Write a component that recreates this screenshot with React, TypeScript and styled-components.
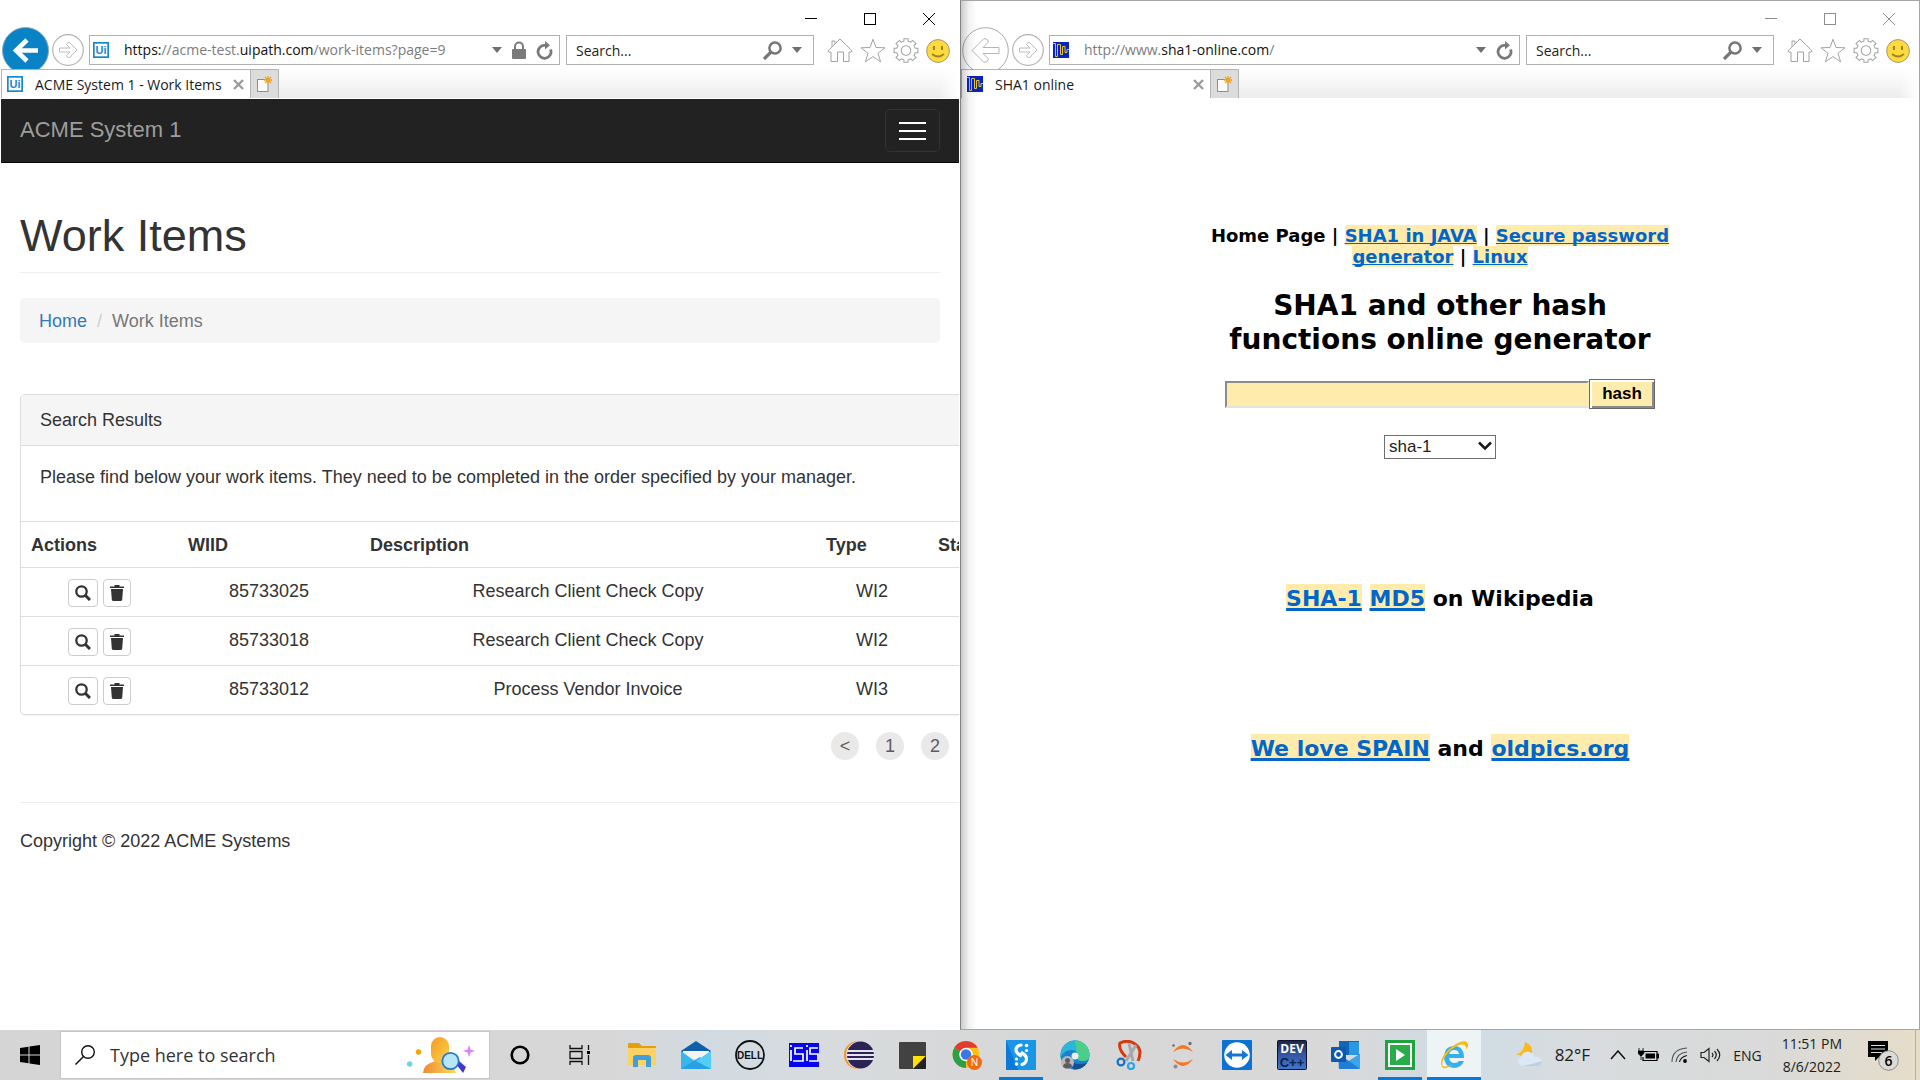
import React from "react";
import styled, { createGlobalStyle, css } from "styled-components";

const UI_FONT = '"Open Sans", "Noto Sans", sans-serif';
const PAGE_FONT = '"Liberation Sans", Arial, sans-serif';
const WIDE_FONT = '"DejaVu Sans", Verdana, sans-serif';

const GlobalStyle = createGlobalStyle`
  *, *::before, *::after { box-sizing: border-box; }
  body { margin: 0; background: #fff; }
  button, input, select { margin: 0; font: inherit; color: inherit; }
  svg { display: block; flex: none; }
`;

/* ---------- desktop and windows ---------- */

const Desktop = styled.div`
  display: flex;
  flex-direction: column;
  height: 100vh;
  font-family: ${UI_FONT};
`;

const Windows = styled.div`
  display: grid;
  grid-template-columns: 1fr 1fr;
  flex: 1;
  min-height: 0;
`;

const WindowFrame = styled.section<{ $back?: boolean }>`
  position: relative;
  display: flex;
  flex-direction: column;
  min-width: 0;
  overflow: hidden;
  background: #fff;
  border: 1px solid #fff;
  ${(p) =>
    p.$back &&
    css`
      border-color: #a5a5a5;
      border-left-color: #828282;
      &::after {
        content: "";
        position: absolute;
        inset: 0 auto 0 0;
        width: 16px;
        pointer-events: none;
        background: linear-gradient(90deg, rgba(0, 0, 0, 0.2), rgba(0, 0, 0, 0.05) 50%, transparent);
      }
    `}
`;

const TitleBar = styled.div<{ $dim?: boolean }>`
  display: flex;
  justify-content: flex-end;
  height: 26px;
  padding: 6px 1px 0 0;
  color: ${(p) => (p.$dim ? "#8c8c8c" : "#000")};
`;

const TitleButton = styled.button`
  display: flex;
  justify-content: center;
  align-items: center;
  width: 59px;
  height: 24px;
  padding: 0;
  background: none;
  border: 0;
`;

const NavRow = styled.div`
  display: flex;
  align-items: flex-start;
  height: 42px;
  padding: 0 9px 0 1px;
  overflow: hidden;
`;

const NavButton = styled.button`
  flex: none;
  padding: 0;
  background: none;
  border: 0;
`;

const ForwardButton = styled(NavButton)`
  margin: 7px 5px 0 3px;
`;

const Field = styled.div`
  display: flex;
  align-items: center;
  height: 30px;
  margin-top: 8px;
  border: 1px solid #b1b1b1;
  background: #fff;
  font-size: 14px;
  color: #111;
`;

const AddressField = styled(Field)`
  flex: 1;
  min-width: 0;
  padding: 0 6px 0 3px;
`;

const Address = styled.div`
  flex: 1;
  min-width: 0;
  padding-left: 15px;
  line-height: 28px;
  white-space: nowrap;
  color: #7c7c7c;
  b {
    font-weight: 400;
    color: #111;
  }
`;

const FieldIcons = styled.div`
  display: flex;
  align-items: center;
  gap: 10px;
`;

const SearchField = styled(Field)`
  width: 248px;
  margin-left: 6px;
  padding: 0 11px 0 9px;
  input {
    flex: 1;
    min-width: 0;
    padding: 0;
    border: 0;
    outline: 0;
    background: none;
    &::placeholder {
      color: #222;
      opacity: 1;
    }
  }
`;

const ToolIcons = styled.div`
  display: flex;
  gap: 7px;
  margin: 11px 0 0 13px;
`;

const TabStrip = styled.div`
  display: flex;
  height: 29px;
  background:
    linear-gradient(90deg, transparent calc(100% - 20px), #fff),
    linear-gradient(#fdfdfd 10%, #ececec);
`;

const Tab = styled.div`
  display: flex;
  align-items: center;
  width: 250px;
  padding: 0 6px 0 5px;
  border: 1px solid #b4b4b4;
  border-bottom: 0;
  background: #fff;
  font-size: 14px;
  color: #1a1a1a;
  white-space: nowrap;
`;

const TabTitle = styled.span`
  flex: 1;
  min-width: 0;
  padding-left: 12px;
`;

const NewTab = styled.button`
  display: flex;
  align-items: center;
  justify-content: center;
  width: 28px;
  padding: 0;
  border: 1px solid #b4b4b4;
  border-width: 1px 1px 0 0;
  background: #dcdcdc;
`;

/* ---------- drawings in the window frame ---------- */

const UiLogo = () => (
  <svg width="16" height="16" viewBox="0 0 16 16">
    <rect width="16" height="16" fill="#1489d0" />
    <rect x="1.7" y="1.7" width="12.6" height="12.6" fill="#fff" />
    <text x="2.6" y="12" fontFamily="Liberation Sans" fontWeight="700" fontSize="11" fill="#1489d0">Ui</text>
  </svg>
);

const ShaLogo = () => (
  <svg width="16" height="16" viewBox="0 0 16 16">
    <rect width="16" height="16" fill="#0723c6" />
    <path d="M0 1.500h2.500v13h2v-12h3v10h2v-8h2.500v6h2v-3h2" fill="none" stroke="#e5c53a" strokeWidth="1" />
  </svg>
);

const BackIcon = ({ active }: { active?: boolean }) =>
  active ? (
    <svg width="47" height="47" viewBox="0 0 47 47">
      <circle cx="23.5" cy="23.5" r="23" fill="#0a83c6" stroke="#8aa5b3" />
      <path d="M25 13 14 23.500 25 34M14 23.500h22" fill="none" stroke="#fff" strokeWidth="4.6" />
    </svg>
  ) : (
    <svg width="47" height="47" viewBox="0 0 47 47">
      <circle cx="23.5" cy="23.5" r="22.8" fill="none" stroke="#ababab" />
      <path d="M10 23.500 22 11.500q4 0 4.500 3.500l-5.500 5.500h16v6h-16l5.500 5.500q-.5 3.500-4.500 3.500z" fill="#fff" stroke="#b5b5b5" />
    </svg>
  );

const ForwardIcon = () => (
  <svg width="32" height="32" viewBox="0 0 32 32">
    <circle cx="16" cy="16" r="15.3" fill="#fff" stroke="#b4b4b4" strokeWidth="1.2" />
    <path d="M25 16 17.500 8.300q-2.500 0-3 2.200l3.500 3.500H7.500v4H18l-3.500 3.500q.5 2.200 3 2.200z" fill="none" stroke="#bbb" />
  </svg>
);

const CaretIcon = () => (
  <svg width="10" height="6" viewBox="0 0 10 6"><path d="M0 0h10L5 6z" fill="#707070" /></svg>
);

const LockIcon = () => (
  <svg width="14" height="18" viewBox="0 0 14 18">
    <path d="M3 9V5.500a4 4 0 0 1 8 0V9" fill="none" stroke="#7a7a7a" strokeWidth="2" />
    <rect y="8" width="14" height="10" rx="1" fill="#7a7a7a" />
  </svg>
);

const RefreshIcon = () => (
  <svg width="17" height="19" viewBox="0 0 17 19">
    <path d="M14.600 8.500A6.500 6.500 0 1 1 9 4.300" fill="none" stroke="#7a7a7a" strokeWidth="2.8" />
    <path d="M9 0l5 4.300-5 4.200z" fill="#7a7a7a" />
  </svg>
);

const MagnifierIcon = () => (
  <svg width="19" height="19" viewBox="0 0 19 19">
    <circle cx="12" cy="7" r="5.6" fill="none" stroke="#757575" strokeWidth="2.5" />
    <path d="M8 11 1 18" stroke="#757575" strokeWidth="3.2" />
  </svg>
);

const HomeIcon = () => (
  <svg width="26" height="25" viewBox="0 0 26 25">
    <path d="M.8 13 13 1l12.200 12-1 1H22v9.500h-5.500V14h-6v9.500H4V14H1.800zM5 8.500V3h3v2.500" fill="#fff" stroke="#a2a2a2" />
  </svg>
);

const StarIcon = () => (
  <svg width="26" height="25" viewBox="0 0 26 25">
    <path d="m13 1.200 3 8.300 9 .3-7 5.500 2.600 8.500L13 18.600l-7.600 5.200L8 15.300 1 9.800l9-.3z" fill="#fff" stroke="#a2a2a2" />
  </svg>
);

const GearIcon = () => (
  <svg width="26" height="25" viewBox="0 0 24 24">
    <path
      d="M10 3V.7h4V3l2.600 1 1.700-1.700 3.300 3-1.900 2 1.200 2.600h2.500v4.200h-2.500l-1.200 2.600 1.900 2-3.300 3-1.700-1.700-2.600 1v2.300h-4V21l-2.600-1-1.700 1.700-3.300-3 1.900-2-1.200-2.600H.6V9.900h2.500l1.200-2.600-1.900-2 3.300-3L7.400 4z"
      fill="#fff"
      stroke="#a2a2a2"
    />
    <circle cx="12" cy="12" r="4.6" fill="none" stroke="#a2a2a2" />
  </svg>
);

const SmileIcon = () => (
  <svg width="24" height="24" viewBox="0 0 24 24">
    <circle cx="12" cy="12" r="11.4" fill="#ffd93e" stroke="#a39a70" />
    <rect x="7" y="7" width="2" height="4" fill="#9a8427" />
    <rect x="15" y="7" width="2" height="4" fill="#9a8427" />
    <path d="M6 15q6 5 12 0" fill="none" stroke="#9a8427" strokeWidth="1.8" />
  </svg>
);

const CloseTabIcon = () => (
  <svg width="11" height="11" viewBox="0 0 11 11"><path d="m1 1 9 9M10 1l-9 9" stroke="#9a9a9a" strokeWidth="2.3" /></svg>
);

const NewTabIcon = () => (
  <svg width="15" height="16" viewBox="0 0 15 16">
    <rect x=".5" y="3.5" width="10.5" height="12" fill="#fafafa" stroke="#8d8d8d" />
    <path d="M11 0v8M7 4h8M8 1l6 6M14 1 8 7" stroke="#f0a51e" strokeWidth="1.3" />
  </svg>
);

type FrameProps = {
  back?: boolean;
  logo: React.ReactNode;
  address: React.ReactNode;
  title: string;
  secure?: boolean;
  children: React.ReactNode;
};

const BrowserWindow = ({ back, logo, address, title, secure, children }: FrameProps) => (
  <WindowFrame $back={back} aria-label={title}>
    <TitleBar $dim={back}>
      <TitleButton aria-label="Minimize">
        <svg width="12" height="12" viewBox="0 0 12 12"><path d="M0 5.500h12" stroke="currentColor" /></svg>
      </TitleButton>
      <TitleButton aria-label="Maximize">
        <svg width="12" height="12" viewBox="0 0 12 12"><rect x=".5" y=".5" width="11" height="11" fill="none" stroke="currentColor" /></svg>
      </TitleButton>
      <TitleButton aria-label="Close">
        <svg width="12" height="12" viewBox="0 0 12 12"><path d="m0 0 12 12M12 0 0 12" stroke="currentColor" /></svg>
      </TitleButton>
    </TitleBar>
    <NavRow>
      <NavButton aria-label="Back"><BackIcon active={!back} /></NavButton>
      <ForwardButton aria-label="Forward"><ForwardIcon /></ForwardButton>
      <AddressField>
        {logo}
        <Address role="textbox" aria-label="Address" tabIndex={0}>{address}</Address>
        <FieldIcons>
          <CaretIcon />
          {secure && <LockIcon />}
          <RefreshIcon />
        </FieldIcons>
      </AddressField>
      <SearchField>
        <input type="text" placeholder="Search..." aria-label="Search the web" />
        <FieldIcons><MagnifierIcon /><CaretIcon /></FieldIcons>
      </SearchField>
      <ToolIcons>
        <NavButton aria-label="Home page"><HomeIcon /></NavButton>
        <NavButton aria-label="Favorites"><StarIcon /></NavButton>
        <NavButton aria-label="Tools"><GearIcon /></NavButton>
        <NavButton aria-label="Send feedback"><SmileIcon /></NavButton>
      </ToolIcons>
    </NavRow>
    <TabStrip>
      <Tab>
        {logo}
        <TabTitle>{title}</TabTitle>
        <NavButton aria-label="Close tab"><CloseTabIcon /></NavButton>
      </Tab>
      <NewTab aria-label="New tab"><NewTabIcon /></NewTab>
    </TabStrip>
    {children}
  </WindowFrame>
);

/* ---------- ACME page ---------- */

const AcmePage = styled.div`
  flex: 1;
  min-height: 0;
  margin-top: 1px;
  overflow: hidden;
  font-family: ${PAGE_FONT};
  font-size: 18px;
  line-height: 25px;
  color: #333;
`;

const AcmeNav = styled.header`
  display: flex;
  align-items: flex-start;
  justify-content: space-between;
  height: 64px;
  padding: 10px 19px;
  background: #222;
  border-bottom: 1px solid #080808;
`;

const Brand = styled.a`
  font-size: 22px;
  line-height: 42px;
  color: #9d9d9d;
  text-decoration: none;
`;

const MenuButton = styled.button`
  display: flex;
  flex-direction: column;
  align-items: center;
  justify-content: center;
  gap: 6px;
  width: 55px;
  height: 43px;
  padding: 0;
  background: none;
  border: 1px solid #333;
  border-radius: 5px;
  span {
    width: 27px;
    height: 2px;
    background: #fff;
  }
`;

const AcmeBody = styled.main`
  padding: 48px 0 0 19px;
`;

const PageTitle = styled.h1`
  margin: 0 19px 25px 0;
  padding-bottom: 11px;
  border-bottom: 1px solid #eee;
  font-size: 45px;
  line-height: 50px;
  font-weight: 400;
`;

const Breadcrumb = styled.nav`
  display: flex;
  gap: 10px;
  margin: 0 19px 51px 0;
  padding: 11px 19px 9px;
  background: #f5f5f5;
  border-radius: 5px;
  color: #777;
  a {
    color: #337ab7;
    text-decoration: none;
  }
  i {
    font-style: normal;
    color: #ccc;
  }
`;

const Panel = styled.section`
  width: 1400px;
  border: 1px solid #ddd;
  border-radius: 5px;
  box-shadow: 0 1px 1px rgba(0, 0, 0, 0.05);
`;

const PanelHeading = styled.h2`
  margin: 0;
  padding: 13px 19px 12px;
  background: #f5f5f5;
  border-bottom: 1px solid #ddd;
  border-radius: 5px 5px 0 0;
  font-size: inherit;
  font-weight: 400;
`;

const PanelText = styled.p`
  margin: 0;
  padding: 19px 19px 31px;
`;

const ItemsTable = styled.table`
  width: 100%;
  table-layout: fixed;
  border-spacing: 0;
  th,
  td {
    padding: 11px 10px 9px;
    border-top: 1px solid #ddd;
    vertical-align: top;
    text-align: center;
  }
  th {
    text-align: left;
    font-weight: 700;
  }
  td {
    height: 49px;
  }
`;

const RowActions = styled.div`
  display: flex;
  justify-content: center;
  gap: 5px;
  height: 28px;
`;

const RowButton = styled.button<{ $wide?: boolean }>`
  display: flex;
  align-items: center;
  justify-content: center;
  width: ${(p) => (p.$wide ? 30 : 28)}px;
  padding: 0;
  background: #fff;
  border: 1px solid #ccc;
  border-radius: 4px;
`;

const Pager = styled.nav`
  display: flex;
  gap: 17px;
  padding: 17px 0 42px 811px;
`;

const PageButton = styled.button`
  width: 28px;
  height: 28px;
  padding: 0;
  border: 0;
  border-radius: 14px;
  background: #e9e9e9;
  color: #5c5c5c;
`;

const Footer = styled.footer`
  padding-top: 26px;
  border-top: 1px solid #eee;
`;

const WORK_ITEMS = [
  { id: "85733025", description: "Research Client Check Copy", type: "WI2" },
  { id: "85733018", description: "Research Client Check Copy", type: "WI2" },
  { id: "85733012", description: "Process Vendor Invoice", type: "WI3" },
];

const ViewIcon = () => (
  <svg width="16" height="16" viewBox="0 0 16 16">
    <circle cx="6.5" cy="6.5" r="5.2" fill="none" stroke="#333" strokeWidth="2.3" />
    <path d="m10.300 10.300 4.700 4.700" stroke="#333" strokeWidth="3" />
  </svg>
);

const TrashIcon = () => (
  <svg width="14" height="16" viewBox="0 0 14 16">
    <path d="M0 1.500h4.500V0h5v1.500H14V3H0z" fill="#333" />
    <path d="M1 4h12l-.8 10.500q-.2 1.500-1.700 1.500h-7q-1.500 0-1.700-1.500z" fill="#333" />
  </svg>
);

const WorkItemsPage = () => (
  <AcmePage>
    <AcmeNav>
      <Brand href="#">ACME System 1</Brand>
      <MenuButton aria-label="Toggle navigation"><span /><span /><span /></MenuButton>
    </AcmeNav>
    <AcmeBody>
      <PageTitle>Work Items</PageTitle>
      <Breadcrumb><a href="#">Home</a><i>/</i><span>Work Items</span></Breadcrumb>
      <Panel>
        <PanelHeading>Search Results</PanelHeading>
        <PanelText>Please find below your work items. They need to be completed in the order specified by your manager.</PanelText>
        <ItemsTable>
          <colgroup>
            <col width="157" /><col width="182" /><col width="456" /><col width="112" /><col />
          </colgroup>
          <thead>
            <tr><th>Actions</th><th>WIID</th><th>Description</th><th>Type</th><th>Status</th></tr>
          </thead>
          <tbody>
            {WORK_ITEMS.map((item) => (
              <tr key={item.id}>
                <td>
                  <RowActions>
                    <RowButton $wide aria-label="View"><ViewIcon /></RowButton>
                    <RowButton aria-label="Delete"><TrashIcon /></RowButton>
                  </RowActions>
                </td>
                <td>{item.id}</td>
                <td>{item.description}</td>
                <td>{item.type}</td>
                <td />
              </tr>
            ))}
          </tbody>
        </ItemsTable>
      </Panel>
      <Pager aria-label="Pages">
        <PageButton>&lt;</PageButton>
        <PageButton>1</PageButton>
        <PageButton>2</PageButton>
      </Pager>
      <Footer>Copyright © 2022 ACME Systems</Footer>
    </AcmeBody>
  </AcmePage>
);

/* ---------- SHA1 page ---------- */

const ShaPage = styled.main`
  display: flex;
  flex-direction: column;
  align-items: center;
  padding-top: 127px;
  font-family: ${WIDE_FONT};
  font-weight: 700;
  color: #000;
  text-align: center;
`;

const HashLink = styled.a<{ $thick?: boolean }>`
  padding-top: ${(p) => (p.$thick ? 2 : 0)}px;
  color: #06c;
  background: #ffecac;
  text-decoration: underline ${(p) => (p.$thick ? 3 : 1)}px;
  text-underline-offset: ${(p) => (p.$thick ? 2 : 1)}px;
  text-decoration-skip-ink: none;
`;

const ShaNav = styled.nav`
  max-width: 480px;
  font-size: 18px;
  line-height: 21px;
`;

const ShaTitle = styled.h1`
  max-width: 480px;
  margin: 22px 0 22px;
  font-size: 28px;
  line-height: 34px;
`;

const HashForm = styled.form`
  display: flex;
  flex-direction: column;
  align-items: center;
  gap: 26px;
  font-family: ${PAGE_FONT};
`;

const HashRow = styled.div`
  display: flex;
  align-items: center;
  input {
    width: 364px;
    height: 27px;
    border: 2px solid;
    border-color: #8c8c8c #ffecac #e3e3e3 #8c8c8c;
    border-radius: 0;
    background: #ffecac;
    outline: 0;
  }
  button {
    width: 66px;
    height: 30px;
    padding: 0;
    border: 1px solid #696969;
    border-radius: 0;
    background: #ffecac;
    box-shadow: inset 2px 2px #fff, inset -2px -2px #8a8a8a;
    font-size: 17px;
    font-weight: 700;
  }
`;

const SelectBox = styled.label`
  position: relative;
  display: block;
  select {
    appearance: none;
    display: block;
    width: 112px;
    height: 24px;
    padding: 0 24px 0 4px;
    border: 1px solid #6f6f6f;
    border-radius: 0;
    background: #fff;
    font-size: 17px;
    line-height: 22px;
    font-weight: 400;
    color: #222;
  }
  svg {
    position: absolute;
    top: 6px;
    right: 4px;
    pointer-events: none;
  }
`;

const LinkLine = styled.p<{ $first?: boolean }>`
  margin: ${(p) => (p.$first ? 126 : 123)}px 0 0;
  font-size: 22px;
  line-height: 27px;
`;

const HashPage = () => (
  <ShaPage>
    <ShaNav>
      Home Page | <HashLink href="#">SHA1 in JAVA</HashLink> | <HashLink href="#">Secure password generator</HashLink> |{" "}
      <HashLink href="#">Linux</HashLink>
    </ShaNav>
    <ShaTitle>SHA1 and other hash functions online generator</ShaTitle>
    <HashForm onSubmit={(e) => e.preventDefault()}>
      <HashRow>
        <input type="text" aria-label="Text to hash" />
        <button type="submit">hash</button>
      </HashRow>
      <SelectBox>
        <select aria-label="Hash function" defaultValue="sha-1">
          <option>sha-1</option>
        </select>
        <svg width="14" height="10" viewBox="0 0 14 10"><path d="m1 1.500 6 6 6-6" fill="none" stroke="#1a1a1a" strokeWidth="2.5" /></svg>
      </SelectBox>
    </HashForm>
    <LinkLine $first>
      <HashLink $thick href="#">SHA-1</HashLink> <HashLink $thick href="#">MD5</HashLink> on Wikipedia
    </LinkLine>
    <LinkLine>
      <HashLink $thick href="#">We love SPAIN</HashLink> and <HashLink $thick href="#">oldpics.org</HashLink>
    </LinkLine>
  </ShaPage>
);

/* ---------- taskbar ---------- */

const Taskbar = styled.footer`
  display: flex;
  align-items: stretch;
  flex: none;
  height: 50px;
  background: linear-gradient(90deg, #d5d5d5, #d7d7d7 32%, #d2dbe2 37%, #d8dbdd 44%, #d6d6d6 55%, #d9d9d9 70%, #cfdce6 76%, #d8dcde 82%, #d9dad9 92%, #e3dccd 98%, #e6dcc8);
  color: #1c1c1c;
`;

const SlotButton = styled.button`
  display: flex;
  align-items: center;
  justify-content: center;
  width: 60px;
  padding: 0;
  background: none;
  border: 0;
`;

const TaskSearch = styled.label`
  display: flex;
  align-items: center;
  width: 430px;
  margin: 1px 0;
  padding: 0 14px;
  background: #fff;
  border: 1px solid #c6c6c6;
  input {
    flex: 1;
    min-width: 0;
    padding: 0 0 0 14px;
    border: 0;
    outline: 0;
    background: none;
    font-size: 18px;
    &::placeholder {
      color: #333;
      opacity: 1;
    }
  }
`;

const Apps = styled.div`
  display: grid;
  grid-template-columns: repeat(16, 1fr);
  width: 866px;
  margin-left: 5px;
`;

const AppButton = styled.button<{ $running?: boolean; $active?: boolean }>`
  display: flex;
  align-items: center;
  justify-content: center;
  padding: 0;
  border: 0;
  background: ${(p) => (p.$active ? "#eef3f6" : "none")};
  box-shadow: ${(p) => (p.$running || p.$active ? "inset 0 -3px #0b78d4" : "none")};
  margin: 0 ${(p) => (p.$running ? 5 : 0)}px;
`;

const Tray = styled.div`
  display: flex;
  flex: 1;
  align-items: center;
  justify-content: flex-end;
  font-size: 14px;
  padding-right: 4px;
`;

const TrayButton = styled.button`
  display: flex;
  align-items: center;
  gap: 12px;
  padding: 0;
  border: 0;
  background: none;
  line-height: 22px;
`;

const Temperature = styled.span`
  font-size: 17px;
`;

const TrayIcons = styled.div`
  display: flex;
  align-items: center;
  gap: 12px;
  margin: 0 20px;
`;

const Clock = styled.time`
  display: block;
  line-height: 23px;
  text-align: center;
`;

const Notices = styled.button`
  margin: 0 16px 0 26px;
  padding: 0;
  border: 0;
  background: none;
`;

const ShowDesktop = styled.div`
  width: 1px;
  align-self: stretch;
  background: #b9b2a4;
`;

const Icon = ({ children, w = 30, h = 30 }: { children: React.ReactNode; w?: number; h?: number }) => (
  <svg width={w} height={h} viewBox={`0 0 ${w} ${h}`}>{children}</svg>
);

const PersonArt = () => (
  <Icon w={68} h={38}>
    <defs>
      <linearGradient id="person" x1="0" y1="0" x2="1" y2="1">
        <stop offset="0" stopColor="#f59a23" />
        <stop offset="1" stopColor="#fdd34c" />
      </linearGradient>
      <linearGradient id="personBase" x1="0" y1="0" x2="1" y2="0">
        <stop offset="0" stopColor="#ee8a35" />
        <stop offset="1" stopColor="#fcdc58" />
      </linearGradient>
    </defs>
    <path d="M16 37q1-9 10-11 5-2 7-4h10l6 15z" fill="url(#personBase)" />
    <rect x="24" y="1" width="18" height="26" rx="9" fill="url(#person)" />
    <path d="m49 28 3-3 7 6-3 6z" fill="#4338ca" />
    <circle cx="43.5" cy="25" r="8.2" fill="#b7e6f6" stroke="#2378cf" strokeWidth="1.8" />
    <circle cx="11.5" cy="16" r="2.7" fill="#f5a40a" />
    <circle cx="2.7" cy="28" r="2.7" fill="#6ad5e6" />
    <path d="m62 9 1.500 4.500L68 15l-4.500 1.500L62 21l-1.500-4.500L56 15l4.500-1.500z" fill="#dd82f5" />
  </Icon>
);

const FolderIcon = () => (
  <Icon w={28} h={24}>
    <path d="M0 1q0-1 1-1h10l3 3h13q1 0 1 1v18H0z" fill="#e0a010" />
    <path d="M0 5h28v16q0 1-1 1H1q-1 0-1-1z" fill="#fdd264" />
    <path d="M5 24V15q0-3 3-3h12q3 0 3 3v9h-5v-7h-8v7z" fill="#3f9fdd" />
  </Icon>
);

const MailIcon = () => (
  <Icon>
    <path d="M0 11 15 1l15 10v3H0z" fill="#0f5fa8" />
    <path d="M2 11h26v8H2z" fill="#f4f4f4" />
    <path d="M0 11l15 11 15-11v18H0z" fill="#38b6ec" />
    <path d="m0 29 19-12 11 12z" fill="#2aa0e4" />
    <path d="M15 21 30 29V11z" fill="#52cdf6" />
  </Icon>
);

const DellIcon = () => (
  <Icon>
    <circle cx="15" cy="15" r="14" fill="none" stroke="#111" strokeWidth="1.8" />
    <text x="15" y="18.5" textAnchor="middle" fontFamily="Liberation Sans" fontWeight="700" fontSize="10" fill="#111">DELL</text>
  </Icon>
);

const IsisIcon = () => (
  <Icon h={24}>
    <rect width="30" height="24" fill="#0505ee" />
    <g fill="none" stroke="#fff" strokeWidth="1.7">
      <path d="M2 2v2M2 7v11M14 5H6v6h8v7H4M18 2v2M18 7v11M29 5h-8v6h8v7h-9" />
    </g>
  </Icon>
);

const EclipseIcon = () => (
  <Icon>
    <circle cx="14" cy="15" r="14" fill="#f7941e" />
    <circle cx="16" cy="15" r="14" fill="#dcdcdc" />
    <circle cx="16.5" cy="15" r="13.5" fill="#2c2255" />
    <path d="M3 11h27M3 15h27M3 19h27" stroke="#e4e4f0" strokeWidth="1.8" />
  </Icon>
);

const StickyIcon = () => (
  <Icon w={27} h={27}>
    <path d="M1 0h25q1 0 1 1v25q0 1-1 1H1q-1 0-1-1V1q0-1 1-1z" fill="#424242" />
    <path d="M14 27V14h13z" fill="#fde100" />
    <path d="M14 27 27 14v12q0 1-1 1z" fill="#222" />
  </Icon>
);

const ChromeIcon = () => (
  <Icon>
    <circle cx="14" cy="14.5" r="13.5" fill="#fbc116" />
    <path d="M14 14.500 2.300 7.800A13.500 13.500 0 0 0 14 28z" fill="#2c9f47" />
    <path d="M2.300 7.800A13.500 13.500 0 0 1 25.700 7.800H14v7z" fill="#e33b2e" />
    <circle cx="14" cy="14.5" r="6.8" fill="#fff" />
    <circle cx="14" cy="14.5" r="5.2" fill="#3b78e7" />
    <circle cx="22.5" cy="22.5" r="7.5" fill="#f26b0f" />
    <text x="22.5" y="26" textAnchor="middle" fontFamily="Open Sans" fontSize="10" fill="#fff">N</text>
  </Icon>
);

const StudioIcon = () => (
  <Icon>
    <rect width="30" height="30" fill="#0b78da" />
    <path d="M0 0h30v30H12z" fill="#1a96e6" />
    <path d="M15 5q-5 1-5 5 0 3 4.500 5.500M16 13q4.500 2.500 4.500 6 0 4-4.500 5.500" fill="none" stroke="#fff" strokeWidth="3.2" strokeLinecap="round" />
    <circle cx="20.500" cy="5.500" r="1.800" fill="#fff" />
    <circle cx="20.5" cy="10.5" r="1.6" fill="#fff" />
    <circle cx="10.5" cy="24" r="1.8" fill="#fff" />
    <circle cx="10.500" cy="19" r="1.600" fill="#fff" />
  </Icon>
);

const EdgeIcon = () => (
  <Icon>
    <circle cx="15" cy="15" r="14.5" fill="#1c7fcf" />
    <path d="M.5 15A14.500 14.500 0 0 1 29.500 15q0 6-7 6-5 0-5-3 2-8-6-8-8 0-11 8z" fill="#2bb7d8" />
    <path d="M15 .5A14.500 14.500 0 0 1 29.500 15q0 6-7 6-5 0-5-3z" fill="#57d66f" opacity=".75" />
    <path d="M10 15q0 12 17 8-5 7-13 6.500Q8 24 10 15z" fill="#144f92" />
    <circle cx="15" cy="16" r="3.5" fill="#e8eef2" />
    <circle cx="7.5" cy="22.5" r="6.5" fill="#b9b9b9" />
    <circle cx="7.5" cy="20.5" r="2.5" fill="#5d5d5d" />
    <path d="M3 27q0-4 4.500-4t4.500 4q-4.500 3-9 0z" fill="#5d5d5d" />
  </Icon>
);

const SnipIcon = () => (
  <Icon w={26}>
    <path d="M10 17Q2 9 4 3q8-4 15 1 8 5 3 17" fill="none" stroke="#d63a0c" strokeWidth="3" />
    <path d="m13 3 4 18M20 5l-10 16" stroke="#a5a9ad" strokeWidth="3" />
    <circle cx="5" cy="22" r="3.4" fill="none" stroke="#1672c4" strokeWidth="2.2" />
    <circle cx="15" cy="26" r="3" fill="none" stroke="#2ba4ea" strokeWidth="2.2" />
  </Icon>
);

const JupyterIcon = () => (
  <Icon w={22} h={28}>
    <path d="M1 11q10-14 20 0-10-7-20 0zM1 18q10 14 20 0-10 7-20 0z" fill="#f37726" />
    <circle cx="18" cy="2.5" r="1.7" fill="#707070" />
    <circle cx="1.5" cy="4.5" r="1.3" fill="#707070" />
    <circle cx="3.5" cy="25.5" r="2" fill="#8b8b8b" />
  </Icon>
);

const TeamViewerIcon = () => (
  <Icon>
    <rect width="30" height="30" rx="1" fill="#0b72d2" />
    <circle cx="15" cy="15" r="12.8" fill="#fff" />
    <path d="m3.500 15 6.500-5v3.500h10V10l6.500 5-6.500 5v-3.500H10V20z" fill="#1477d2" />
  </Icon>
);

const DevIcon = () => (
  <Icon>
    <defs>
      <linearGradient id="dev" x1="0" y1="0" x2="0" y2="1">
        <stop offset="0" stopColor="#1e2440" />
        <stop offset=".45" stopColor="#34549c" />
        <stop offset="1" stopColor="#3f78d0" />
      </linearGradient>
    </defs>
    <rect x=".5" y=".5" width="29" height="29" rx="1" fill="url(#dev)" stroke="#0d1330" />
    <text x="15" y="13" textAnchor="middle" fontFamily="Open Sans" fontWeight="700" fontSize="12" fill="#fff">DEV</text>
    <text x="15" y="27" textAnchor="middle" fontFamily="Liberation Sans" fontWeight="700" fontSize="13" fill="#10204f">C++</text>
  </Icon>
);

const OutlookIcon = () => (
  <Icon w={29} h={28}>
    <rect x="8" width="20" height="14" fill="#1066b5" />
    <path d="M18 1h10v13H18z" fill="#2a97e4" />
    <path d="M7 13l11 7 11-7v14q0 1-1 1H8z" fill="#1f7fd6" />
    <path d="m18 20 11-7v15z" fill="#38a5ee" />
    <rect y="6" width="15" height="15" rx="1" fill="#0a5ab0" />
    <circle cx="7.5" cy="13.5" r="3.4" fill="none" stroke="#fff" strokeWidth="2" />
  </Icon>
);

const CamtasiaIcon = () => (
  <Icon>
    <rect width="30" height="30" fill="#1ea43f" />
    <rect x="3" y="3" width="24" height="24" fill="#fff" />
    <rect x="5" y="5" width="20" height="20" fill="#29ad49" />
    <path d="M11 9v12l9-6z" fill="#fff" />
  </Icon>
);

const ExplorerIcon = () => (
  <Icon>
    <path d="M25 18H10q1 5 5.500 5 3 0 4.500-2h5q-3 7-10 7-10-1-10-11Q5.500 6 15 6q10 0 10 12zM20 14q-.5-4-4.500-4-4.500 0-5.200 4z" fill="#35b0ea" />
    <path d="M4 28Q-2 22 9 10 20 0 27 1.500q4 2 .5 8Q27 3 20 5 12 8 6 17q-5 8-1 9.500 3 .5 8-2-6 5-9 3.500z" fill="#f4bb1c" />
  </Icon>
);

const APPS = [
  { name: "File Explorer", art: FolderIcon },
  { name: "Mail", art: MailIcon },
  { name: "Dell", art: DellIcon },
  { name: "Isis", art: IsisIcon },
  { name: "Eclipse", art: EclipseIcon },
  { name: "Sticky Notes", art: StickyIcon },
  { name: "Chrome", art: ChromeIcon },
  { name: "UiPath Studio", art: StudioIcon, running: true },
  { name: "Edge", art: EdgeIcon },
  { name: "Snipping Tool", art: SnipIcon },
  { name: "Jupyter", art: JupyterIcon },
  { name: "TeamViewer", art: TeamViewerIcon },
  { name: "Dev-C++", art: DevIcon },
  { name: "Outlook", art: OutlookIcon },
  { name: "Camtasia", art: CamtasiaIcon, running: true },
  { name: "Internet Explorer", art: ExplorerIcon, active: true },
];

const SystemTaskbar = () => (
  <Taskbar>
    <SlotButton aria-label="Start">
      <Icon w={20} h={20}><path d="M0 3l8.500-1.200v7.700H0zM9.500 1.600 20 0v9.500H9.500zM0 10.500h8.500v7.700L0 17zM9.500 10.500H20V20L9.500 18.400z" /></Icon>
    </SlotButton>
    <TaskSearch>
      <Icon w={21} h={20}>
        <circle cx="13" cy="7" r="6.3" fill="none" stroke="#111" strokeWidth="1.4" />
        <path d="m8.500 11.500-8 8" stroke="#111" strokeWidth="1.5" />
      </Icon>
      <input type="text" placeholder="Type here to search" aria-label="Type here to search" />
      <PersonArt />
    </TaskSearch>
    <SlotButton aria-label="Cortana">
      <Icon w={20} h={20}><circle cx="10" cy="10" r="8.3" fill="none" stroke="#000" strokeWidth="2.6" /></Icon>
    </SlotButton>
    <SlotButton aria-label="Task View">
      <Icon w={22} h={20}>
        <path d="M1 0v3.500h12V0M1 20v-3.500h12V20M1 6.500h12v7H1zM19.500 0v5M19.500 10v10" fill="none" stroke="#111" strokeWidth="1.3" />
        <rect x="18" y="6" width="3" height="3" />
      </Icon>
    </SlotButton>
    <Apps>
      {APPS.map(({ name, art: Art, running, active }) => (
        <AppButton key={name} aria-label={name} $running={running} $active={active}><Art /></AppButton>
      ))}
    </Apps>
    <Tray>
      <TrayButton aria-label="Weather">
        <Icon w={27} h={26}>
          <path d="M9 0q8 3 7 11-5 6-16 1 8-1 9-12z" fill="#fbb91d" />
          <path d="M5 24a5 5 0 0 1 0-9q2-6 8-5 5 1 6 5 7 0 7 5 0 4-5 4z" fill="#dde8f5" />
          <path d="M4 24q10-1 22-5 0 5-5 5z" fill="#b9cfe9" />
        </Icon>
        <Temperature>82°F</Temperature>
      </TrayButton>
      <TrayIcons>
        <Icon w={16} h={10}><path d="m1 9 7-8 7 8" fill="none" stroke="#111" strokeWidth="1.5" /></Icon>
        <Icon w={21} h={14}>
          <path d="M5 3.500h14v9H5V9" fill="none" stroke="#000" strokeWidth="1.2" />
          <path d="M7.500 5.500h9.500v5H7.500z" />
          <path d="M19 6h2v4h-2zM1 0v3M5 0v3M0 3h6v2L4 7.500H2L0 5zM3 7v5" stroke="#000" strokeWidth=".8" />
        </Icon>
        <Icon w={17} h={16}>
          <g fill="none" stroke="#555" strokeWidth="1.1">
            <path d="M1 15Q1 2 16 1" /><path d="M5 15Q6 6 16 5" /><path d="M8.500 15Q9.500 10 16 8.500" stroke="#111" />
          </g>
          <circle cx="14" cy="14" r="1.9" />
        </Icon>
        <Icon w={21} h={16}>
          <g fill="none" stroke="#222" strokeWidth="1.2">
            <path d="M1 5.500h3l5-4v13l-5-4H1zM12 6q2 2 0 4M14.500 4q3.500 4 0 8M17 2q5.500 6 0 12" />
          </g>
        </Icon>
        <span>ENG</span>
      </TrayIcons>
      <Clock>11:51 PM<br />8/6/2022</Clock>
      <Notices aria-label="6 notifications">
        <Icon w={31} h={31}>
          <path d="M0 1h20v16h-9l-4 4v-4H0z" />
          <path d="M3 5.500h14M3 9h14M3 12.500h11" stroke="#ddd" strokeWidth="1.2" />
          <circle cx="20.5" cy="20.5" r="9.8" fill="#dcdad6" stroke="#777" strokeWidth=".8" />
          <text x="20.5" y="26" textAnchor="middle" fontFamily="Open Sans" fontWeight="600" fontSize="14">6</text>
        </Icon>
      </Notices>
      <ShowDesktop />
    </Tray>
  </Taskbar>
);

export default function App() {
  return (
    <Desktop>
      <GlobalStyle />
      <Windows>
        <BrowserWindow
          secure
          logo={<UiLogo />}
          title="ACME System 1 - Work Items"
          address={<><b>https:</b>//acme-test.<b>uipath.com</b>/work-items?page=9</>}
        >
          <WorkItemsPage />
        </BrowserWindow>
        <BrowserWindow back logo={<ShaLogo />} title="SHA1 online" address={<>http://www.<b>sha1-online.com</b>/</>}>
          <HashPage />
        </BrowserWindow>
      </Windows>
      <SystemTaskbar />
    </Desktop>
  );
}
